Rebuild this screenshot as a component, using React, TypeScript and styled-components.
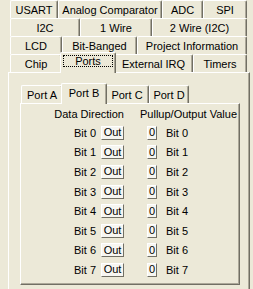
import React from 'react';
import styled, { createGlobalStyle } from 'styled-components';

const GlobalStyle = createGlobalStyle`
  body {
    margin: 0;
    background: #ece9d8;
  }
`;

const Frame = styled.div`
  width: 253px;
  height: 289px;
  overflow: hidden;
  box-sizing: border-box;
  padding: 0 3px 0 8px;
  background: #ece9d8;
  color: #000;
  font-family: 'Liberation Sans', Arial, sans-serif;
  font-size: 11px;
`;

const TabRows = styled.div`
  padding: 0 3px 0 2px;
`;

const TabRow = styled.div`
  display: flex;
  height: 18px;
`;

const Tab = styled.div<{ $w: number; $active?: boolean }>`
  position: relative;
  flex: none;
  width: ${p => p.$w}px;
  box-sizing: border-box;
  display: flex;
  align-items: center;
  justify-content: center;
  white-space: nowrap;
  background: #ece9d8;
  border-top: 1px solid #fff;
  border-left: 1px solid #fff;
  border-right: 1px solid #716f64;
  box-shadow: inset -1px 0 #aca899;
  border-radius: 2px 2px 0 0;
  height: 18px;

  ${p =>
    p.$active &&
    `
    z-index: 1;
    width: ${p.$w + 4}px;
    height: 21px;
    margin: -2px -2px -1px;
    padding-bottom: 3px;
  `}
`;

const FocusRing = styled.span`
  flex: 1;
  align-self: stretch;
  margin: 2px 2px 3px;
  border: 1px dotted #000;
  display: flex;
  align-items: center;
  justify-content: center;
`;

const Panel = styled.div`
  box-sizing: border-box;
  height: 240px;
  padding: 12px 9px 0 11px;
  border-top: 1px solid #fff;
  border-left: 1px solid #fff;
  border-right: 1px solid #716f64;
  box-shadow: inset -1px 0 #aca899;
`;

const InnerTabs = styled.div`
  display: flex;
  height: 18px;
  padding-left: 1px;
`;

const InnerPanel = styled.div`
  box-sizing: border-box;
  width: 220px;
  height: 182px;
  border-top: 1px solid #fff;
  border-left: 1px solid #fff;
  border-right: 1px solid #716f64;
  border-bottom: 1px solid #716f64;
  box-shadow: inset -1px -1px #aca899;
`;

const HeaderRow = styled.div`
  display: flex;
  align-items: center;
  height: 19px;
  white-space: nowrap;
`;

const DirHeader = styled.span`
  width: 103px;
  text-align: right;
`;

const PullHeader = styled.span`
  margin-left: 16px;
`;

const BitRow = styled.div`
  display: flex;
  align-items: center;
  height: 19.6px;
  white-space: nowrap;
`;

const BitLabel = styled.span`
  width: 75px;
  text-align: right;
`;

const SmallButton = styled.div<{ $w: number; $gap: number }>`
  box-sizing: border-box;
  width: ${p => p.$w}px;
  height: 14px;
  margin-left: ${p => p.$gap}px;
  display: flex;
  align-items: center;
  justify-content: center;
  background: #f7f6f1;
  border-top: 1px solid #fff;
  border-left: 1px solid #fff;
  border-right: 1px solid #716f64;
  border-bottom: 1px solid #716f64;
  line-height: 1;
`;

const ValueLabel = styled.span`
  margin-left: 9px;
`;

const rows = [
  [
    { label: 'USART', w: 48 },
    { label: 'Analog Comparator', w: 104 },
    { label: 'ADC', w: 41 },
    { label: 'SPI', w: 44 },
  ],
  [
    { label: 'I2C', w: 70 },
    { label: '1 Wire', w: 72 },
    { label: '2 Wire (I2C)', w: 95 },
  ],
  [
    { label: 'LCD', w: 52 },
    { label: 'Bit-Banged', w: 75 },
    { label: 'Project Information', w: 110 },
  ],
  [
    { label: 'Chip', w: 52 },
    { label: 'Ports', w: 52, active: true },
    { label: 'External IRQ', w: 79 },
    { label: 'Timers', w: 54 },
  ],
];

const ports = [
  { label: 'Port A', w: 42 },
  { label: 'Port B', w: 42, active: true },
  { label: 'Port C', w: 44 },
  { label: 'Port D', w: 40 },
];

const bits = [0, 1, 2, 3, 4, 5, 6, 7];

export default function App() {
  return (
    <Frame>
      <GlobalStyle />
      <TabRows>
        {rows.map((row, i) => (
          <TabRow key={i}>
            {row.map(t => (
              <Tab key={t.label} $w={t.w} $active={t.active}>
                {t.active ? <FocusRing>{t.label}</FocusRing> : t.label}
              </Tab>
            ))}
          </TabRow>
        ))}
      </TabRows>
      <Panel>
        <InnerTabs>
          {ports.map(p => (
            <Tab key={p.label} $w={p.w} $active={p.active}>
              {p.label}
            </Tab>
          ))}
        </InnerTabs>
        <InnerPanel>
          <HeaderRow>
            <DirHeader>Data Direction</DirHeader>
            <PullHeader>Pullup/Output Value</PullHeader>
          </HeaderRow>
          {bits.map(b => (
            <BitRow key={b}>
              <BitLabel>Bit {b}</BitLabel>
              <SmallButton $w={23} $gap={5}>Out</SmallButton>
              <SmallButton $w={10} $gap={23}>0</SmallButton>
              <ValueLabel>Bit {b}</ValueLabel>
            </BitRow>
          ))}
        </InnerPanel>
      </Panel>
    </Frame>
  );
}
